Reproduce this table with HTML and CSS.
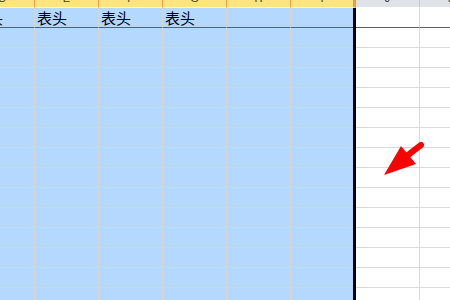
FILE: index.html
```html
<!DOCTYPE html>
<html lang="zh-CN">
<head>
    <meta charset="UTF-8">
    <title>表头</title>
    <link rel="stylesheet" href="styles.css">
</head>
<body>

<div class="sheet" id="sheet">
    <div class="col-head sel"><span>D</span></div>
    <div class="col-head sel"><span>E</span></div>
    <div class="col-head sel"><span>F</span></div>
    <div class="col-head sel"><span>G</span></div>
    <div class="col-head sel"><span>H</span></div>
    <div class="col-head sel last"><span>I</span></div>
    <div class="col-head"><span>J</span></div>
    <div class="col-head"><span>K</span></div>

    <div class="cell sel title">表头</div>
    <div class="cell sel title">表头</div>
    <div class="cell sel title">表头</div>
    <div class="cell sel title">表头</div>
    <div class="cell sel title"></div>
    <div class="cell sel title last"></div>
    <div class="cell title"></div>
    <div class="cell title"></div>
</div>

<svg class="arrow" width="60" height="50" viewBox="0 0 60 50">
    <line x1="38" y1="25" x2="51" y2="15" stroke="#ff0000" stroke-width="6" stroke-linecap="round"/>
    <polygon points="14,45 31,16 46,34" fill="#ff0000"/>
</svg>

<script>
    // empty rows under the header row
    const sheet = document.getElementById("sheet");
    for (let r = 0; r < 14; r++) {
        for (let c = 0; c < 8; c++) {
            const cell = document.createElement('div');
            cell.classList.add('cell');
            if (c < 6) cell.classList.add('sel');
            if (c === 5) cell.classList.add('last');
            sheet.appendChild(cell);
        }
    }
</script>

</body>
</html>
```

FILE: styles.css
```css
body {
    margin: 0;
    overflow: hidden;
    background-color: #ffffff;
    font-family: "Liberation Sans", Arial, sans-serif;
}
/* sheet is scrolled a bit, column D is cut on the left */
.sheet {
    display: grid;
    grid-template-columns: 64px 64px 64px 64px 64px 65px 64px 64px;
    grid-template-rows: 8px 20px;
    grid-auto-rows: 20px;
    margin-left: -29px;
}
.col-head {
    box-sizing: border-box;
    height: 8px;
    overflow: hidden;
    background-color: #dfe3e8;
    border-right: 1px solid #c5cad0;
    border-bottom: 1px solid #ffffff;
    color: #3a3a3a;
    font-size: 11px;
    text-align: center;
}
.col-head span {
    display: block;
    line-height: 12px;
    margin-top: -8px;
}
.col-head.sel {
    background-color: #fde47c;
    border-right-color: #e2a04f;
    border-bottom-color: #fff6d8;
}
.col-head.last {
    border-right: 3px solid #e2a04f;
}
.cell {
    box-sizing: border-box;
    border-right: 1px solid #dadada;
    border-bottom: 1px solid #dadada;
    font-size: 15px;
    line-height: 19px;
    padding-left: 2px;
    white-space: nowrap;
    overflow: hidden;
    font-family: "Noto Sans CJK SC", sans-serif;
    color: #000000;
}
.cell.sel {
    background-color: #b5d8fe;
    border-right-color: #d8d5ce;
    border-bottom-color: #d8d5ce;
}
.cell.last {
    position: relative;
    overflow: visible;
    border-right: 3px solid #000000;
}
.cell.last::after {
    content: "";
    position: absolute;
    right: -3px;
    bottom: -1px;
    width: 3px;
    height: 1px;
    background-color: #000000;
}
.cell.title {
    border-bottom-color: #606060;
}
.arrow {
    position: absolute;
    left: 370px;
    top: 130px;
}
```
